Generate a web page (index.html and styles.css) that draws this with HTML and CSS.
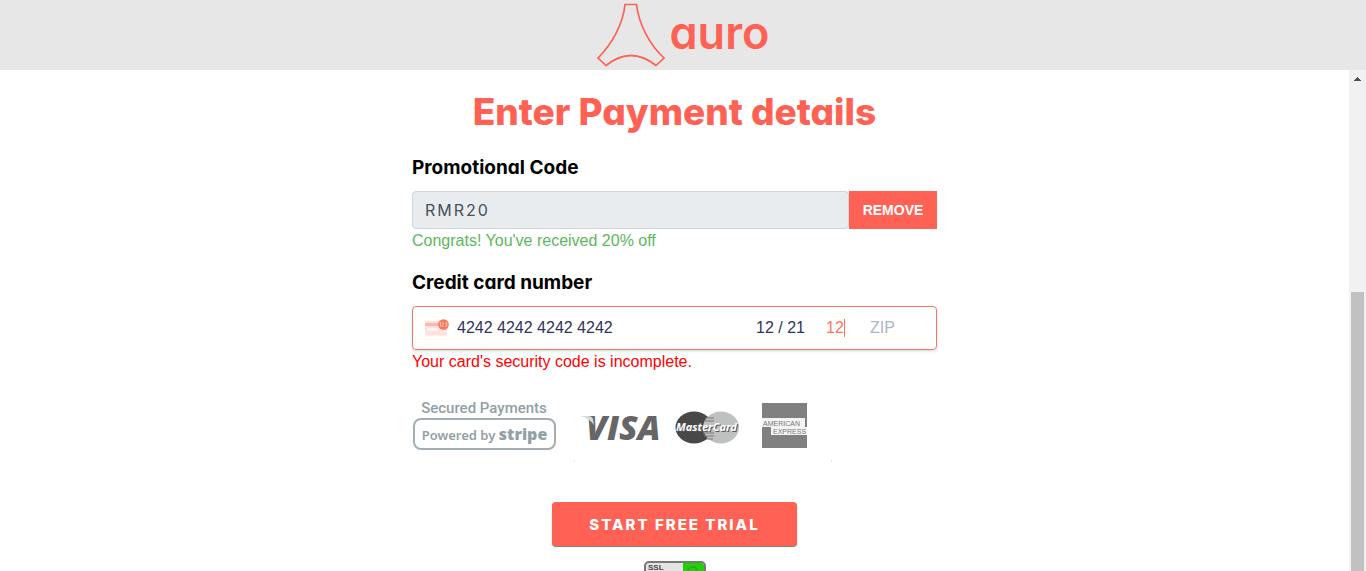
FILE: index.html
```html
<!DOCTYPE html>
<html lang="en">
<head>
<meta charset="utf-8">
<meta name="viewport" content="width=device-width, initial-scale=1">
<title>auro – Payment details</title>
<link rel="stylesheet" href="styles.css">
</head>
<body>
<header class="topbar">
  <a class="brand" href="#" aria-label="auro">
    <svg class="brand-mark" viewBox="0 0 68 64" width="68" height="64" fill="none" stroke="#ff6154" stroke-width="1.7">
      <path d="M28 1.500H39.500C42 22 53 42 67 55L59 62.500Q34 42.500 9 62.500L1 55C14 42 26 22 28 1.500Z"/>
    </svg>
    <span class="brand-name">auro</span>
  </a>
</header>
<div class="viewport">
  <main class="page">
    <form class="payment">
      <h1 class="title">Enter Payment details</h1>

      <label class="label" for="promo">Promotional Code</label>
      <div class="promo">
        <input class="promo-input" id="promo" type="text" value="RMR20" readonly>
        <button class="promo-remove" type="button">REMOVE</button>
      </div>
      <p class="note note-success">Congrats! You've received 20% off</p>

      <label class="label label-card" for="card">Credit card number</label>
      <div class="card">
        <svg class="card-icon" viewBox="0 0 24 20" width="24" height="20">
          <rect x="0" y="3" width="22" height="14.500" rx="1.500" fill="#ffe1dc"/>
          <rect x="0" y="5" width="22" height="3" fill="#ffb5a8"/>
          <rect x="2" y="10" width="12" height="3" rx="1" fill="#fff3f0"/>
          <circle cx="18.500" cy="6.500" r="5.300" fill="#fa755a"/>
          <g fill="none" stroke="#ffe1dc" stroke-width=".8"><path d="M14.700 5l.7-.4v4M16.800 5.200q1.600-1.400 1.700.2 0 1-1.700 2.900h2M20.200 5q1.800-.9 1.700.5 0 .9-1 .9 1.300 0 1.200 1.100-.3 1.400-2 .7"/></g>
        </svg>
        <input class="field field-number" id="card" type="text" value="4242 4242 4242 4242">
        <input class="field field-expiry" type="text" value="12 / 21" aria-label="Expiry date">
        <span class="cvc"><input class="field field-cvc" type="text" value="12" aria-label="Security code"><span class="caret"></span></span>
        <input class="field field-zip" type="text" placeholder="ZIP" aria-label="ZIP">
      </div>
      <p class="note note-error">Your card's security code is incomplete.</p>

      <div class="trust">
        <div class="stripe">
          <span class="stripe-caption">Secured Payments</span>
          <span class="stripe-badge">Powered by <b class="stripe-name">stripe</b></span>
        </div>
        <svg class="cards" viewBox="0 0 260 66" width="260" height="66" role="img" aria-label="Visa, MasterCard, American Express">
          <text class="visa" x="12" y="42" fill="#666">VISA</text>
          <path d="M6 18H14Q18 18 19 21L20 27Q15 20 6 18Z" fill="#d5d9dc"/>
          <ellipse cx="120" cy="29.500" rx="18.500" ry="16" fill="#484848"/>
          <ellipse cx="147" cy="29.500" rx="18" ry="16" fill="#bfc1c1"/>
          <path d="M131 20h9M130 23h10M129 35h11M130 38h10M132 41h7" stroke="#777" stroke-width="1.200"/>
          <text class="mastercard mastercard-shade" x="103" y="34">MasterCard</text>
          <text class="mastercard" x="102" y="33">MasterCard</text>
          <rect x="188" y="5" width="45" height="45" fill="#808080"/>
          <path d="M188 20H231V29H233V37H197V29H188Z" fill="#f4f4f4"/>
          <text class="amex" x="189" y="28">AMERICAN</text>
          <text class="amex" x="199" y="36">EXPRESS</text>
          <path d="M0 63h1M257 63h1" stroke="#ccc"/>
        </svg>
      </div>

      <button class="submit" type="submit">START FREE TRIAL</button>

      <svg class="ssl" viewBox="0 0 64 30" width="64" height="30" role="img" aria-label="SSL">
        <rect x="2" y="1" width="60" height="30" rx="4" fill="#e4e4e4" stroke="#777" stroke-width="2"/>
        <path d="M40 2H58Q61 2 61 5V30H40Z" fill="#21d007"/>
        <text class="ssl-text" x="5" y="9">SSL</text>
        <path d="M45 11q0-5 4.500-5T54 11" fill="none" stroke="#3b9f30" stroke-width="1.300"/>
      </svg>
    </form>
  </main>
  <div class="scrollbar" aria-hidden="true">
    <svg class="scroll-arrow" viewBox="0 0 7 4" width="7" height="4" shape-rendering="crispEdges"><path d="M3 0h1v1h1v1h1v1h1v1H0V3h1V2h1V1h1Z" fill="#505050"/></svg>
    <div class="scroll-thumb"></div>
  </div>
</div>
</body>
</html>
```
FILE: styles.css
```css
* { box-sizing: border-box; }

body {
  margin: 0;
  height: 100vh;
  display: flex;
  flex-direction: column;
  overflow: hidden;
  background: #fff;
  color: #000;
  font: 16px/24px "Liberation Sans", Arial, sans-serif;
}

.topbar {
  flex: none;
  display: flex;
  justify-content: center;
  height: 70px;
  padding-top: 3px;
  background: #e7e7e7;
}

.brand {
  display: flex;
  gap: 5px;
  color: #ff6154;
  text-decoration: none;
}

.brand-name,
.title,
.label,
.promo-input,
.submit {
  font-family: Inter, "Open Sans", sans-serif;
  font-feature-settings: "cv11";
}

.brand-name {
  font-size: 45px;
  font-weight: 600;
  line-height: 60px;
}

.viewport {
  flex: 1;
  display: flex;
  min-height: 0;
}

.page {
  flex: 1;
  overflow: hidden;
}

.payment {
  display: flex;
  flex-direction: column;
  max-width: 525px;
  margin: 0 auto;
  padding-top: 20px;
}

.title {
  margin: 0 0 22px;
  color: #ff6154;
  font-size: 37px;
  font-weight: 800;
  line-height: 44px;
  text-align: center;
}

.label {
  margin-bottom: 11px;
  font-size: 19px;
  font-weight: 700;
  line-height: 24px;
}

.label-card { margin-top: 18px; }

.promo { display: flex; }

.promo-input {
  flex: 1;
  min-width: 0;
  height: 38px;
  padding: 0 12px;
  border: 1px solid #ced4da;
  border-radius: 4px;
  background: #e9ecef;
  color: #495057;
  font-size: 16px;
  font-weight: 400;
  letter-spacing: 2px;
}

.promo-remove {
  width: 88px;
  border: 0;
  padding: 0;
  background: #ff6154;
  color: #fff;
  font: bold 14px "Liberation Sans", Arial, sans-serif;
}

.note { margin: 0; }
.note-success { color: #5cb85c; }
.note-error { color: #f00; }

.card {
  display: flex;
  align-items: center;
  height: 44px;
  padding: 0 12px;
  border: 1px solid #fa755a;
  border-radius: 4px;
  box-shadow: 0 1px 3px #cfd7df;
}

.card-icon { margin-right: 8px; }

.field {
  border: 0;
  padding: 0;
  outline: 0;
  background: transparent;
  color: #32325d;
  font: 16px "Liberation Sans", Arial, sans-serif;
}

.field-number { flex: 1; min-width: 0; }
.field-expiry { width: 70px; }
.cvc { display: flex; width: 44px; }
.field-cvc { width: 18px; color: #fa755a; }
.caret { width: 1px; background: #fa755a; }
.field-zip { width: 54px; }
.field-zip::placeholder { color: #aab7c4; }

.trust {
  display: flex;
  gap: 18px;
  margin-top: 24px;
}

.stripe {
  width: 144px;
  display: flex;
  flex-direction: column;
  color: #939fa4;
  font-family: Roboto, sans-serif;
  font-weight: 500;
  text-align: center;
}

.stripe-caption {
  font-size: 15px;
  line-height: 20px;
}

.stripe-badge {
  height: 32px;
  margin-left: 1px;
  border: 2px solid #a4aeb2;
  border-radius: 8px;
  font: 600 13px/28px "Noto Sans", sans-serif;
  white-space: nowrap;
}

.stripe-name { font-size: 16px; }

.visa { font: italic 800 34px "Open Sans", sans-serif; }
.mastercard { font: italic 700 11px "Noto Sans", sans-serif; fill: #fff; }
.mastercard-shade { fill: #555; }
.amex { font: 7px "Liberation Sans", sans-serif; fill: #777; }

.submit {
  align-self: center;
  width: 245px;
  height: 44px;
  margin: 38px 0 15px;
  padding: 0;
  border: 0;
  border-radius: 4px;
  box-shadow: 0 1px 1px #777;
  background: #ff6154;
  color: #fff;
  font-size: 15px;
  font-weight: 800;
  letter-spacing: 2px;
}

.ssl { align-self: center; }
.ssl-text { font: bold 8px "Liberation Sans", sans-serif; fill: #444; }

.scrollbar {
  display: flex;
  flex-direction: column;
  align-items: center;
  width: 17px;
  padding-top: 7px;
  background: #f1f1f1;
}

.scroll-arrow { flex: none; margin-bottom: 211px; }

.scroll-thumb {
  flex: 1;
  width: 13px;
  background: #c1c1c1;
}
```
